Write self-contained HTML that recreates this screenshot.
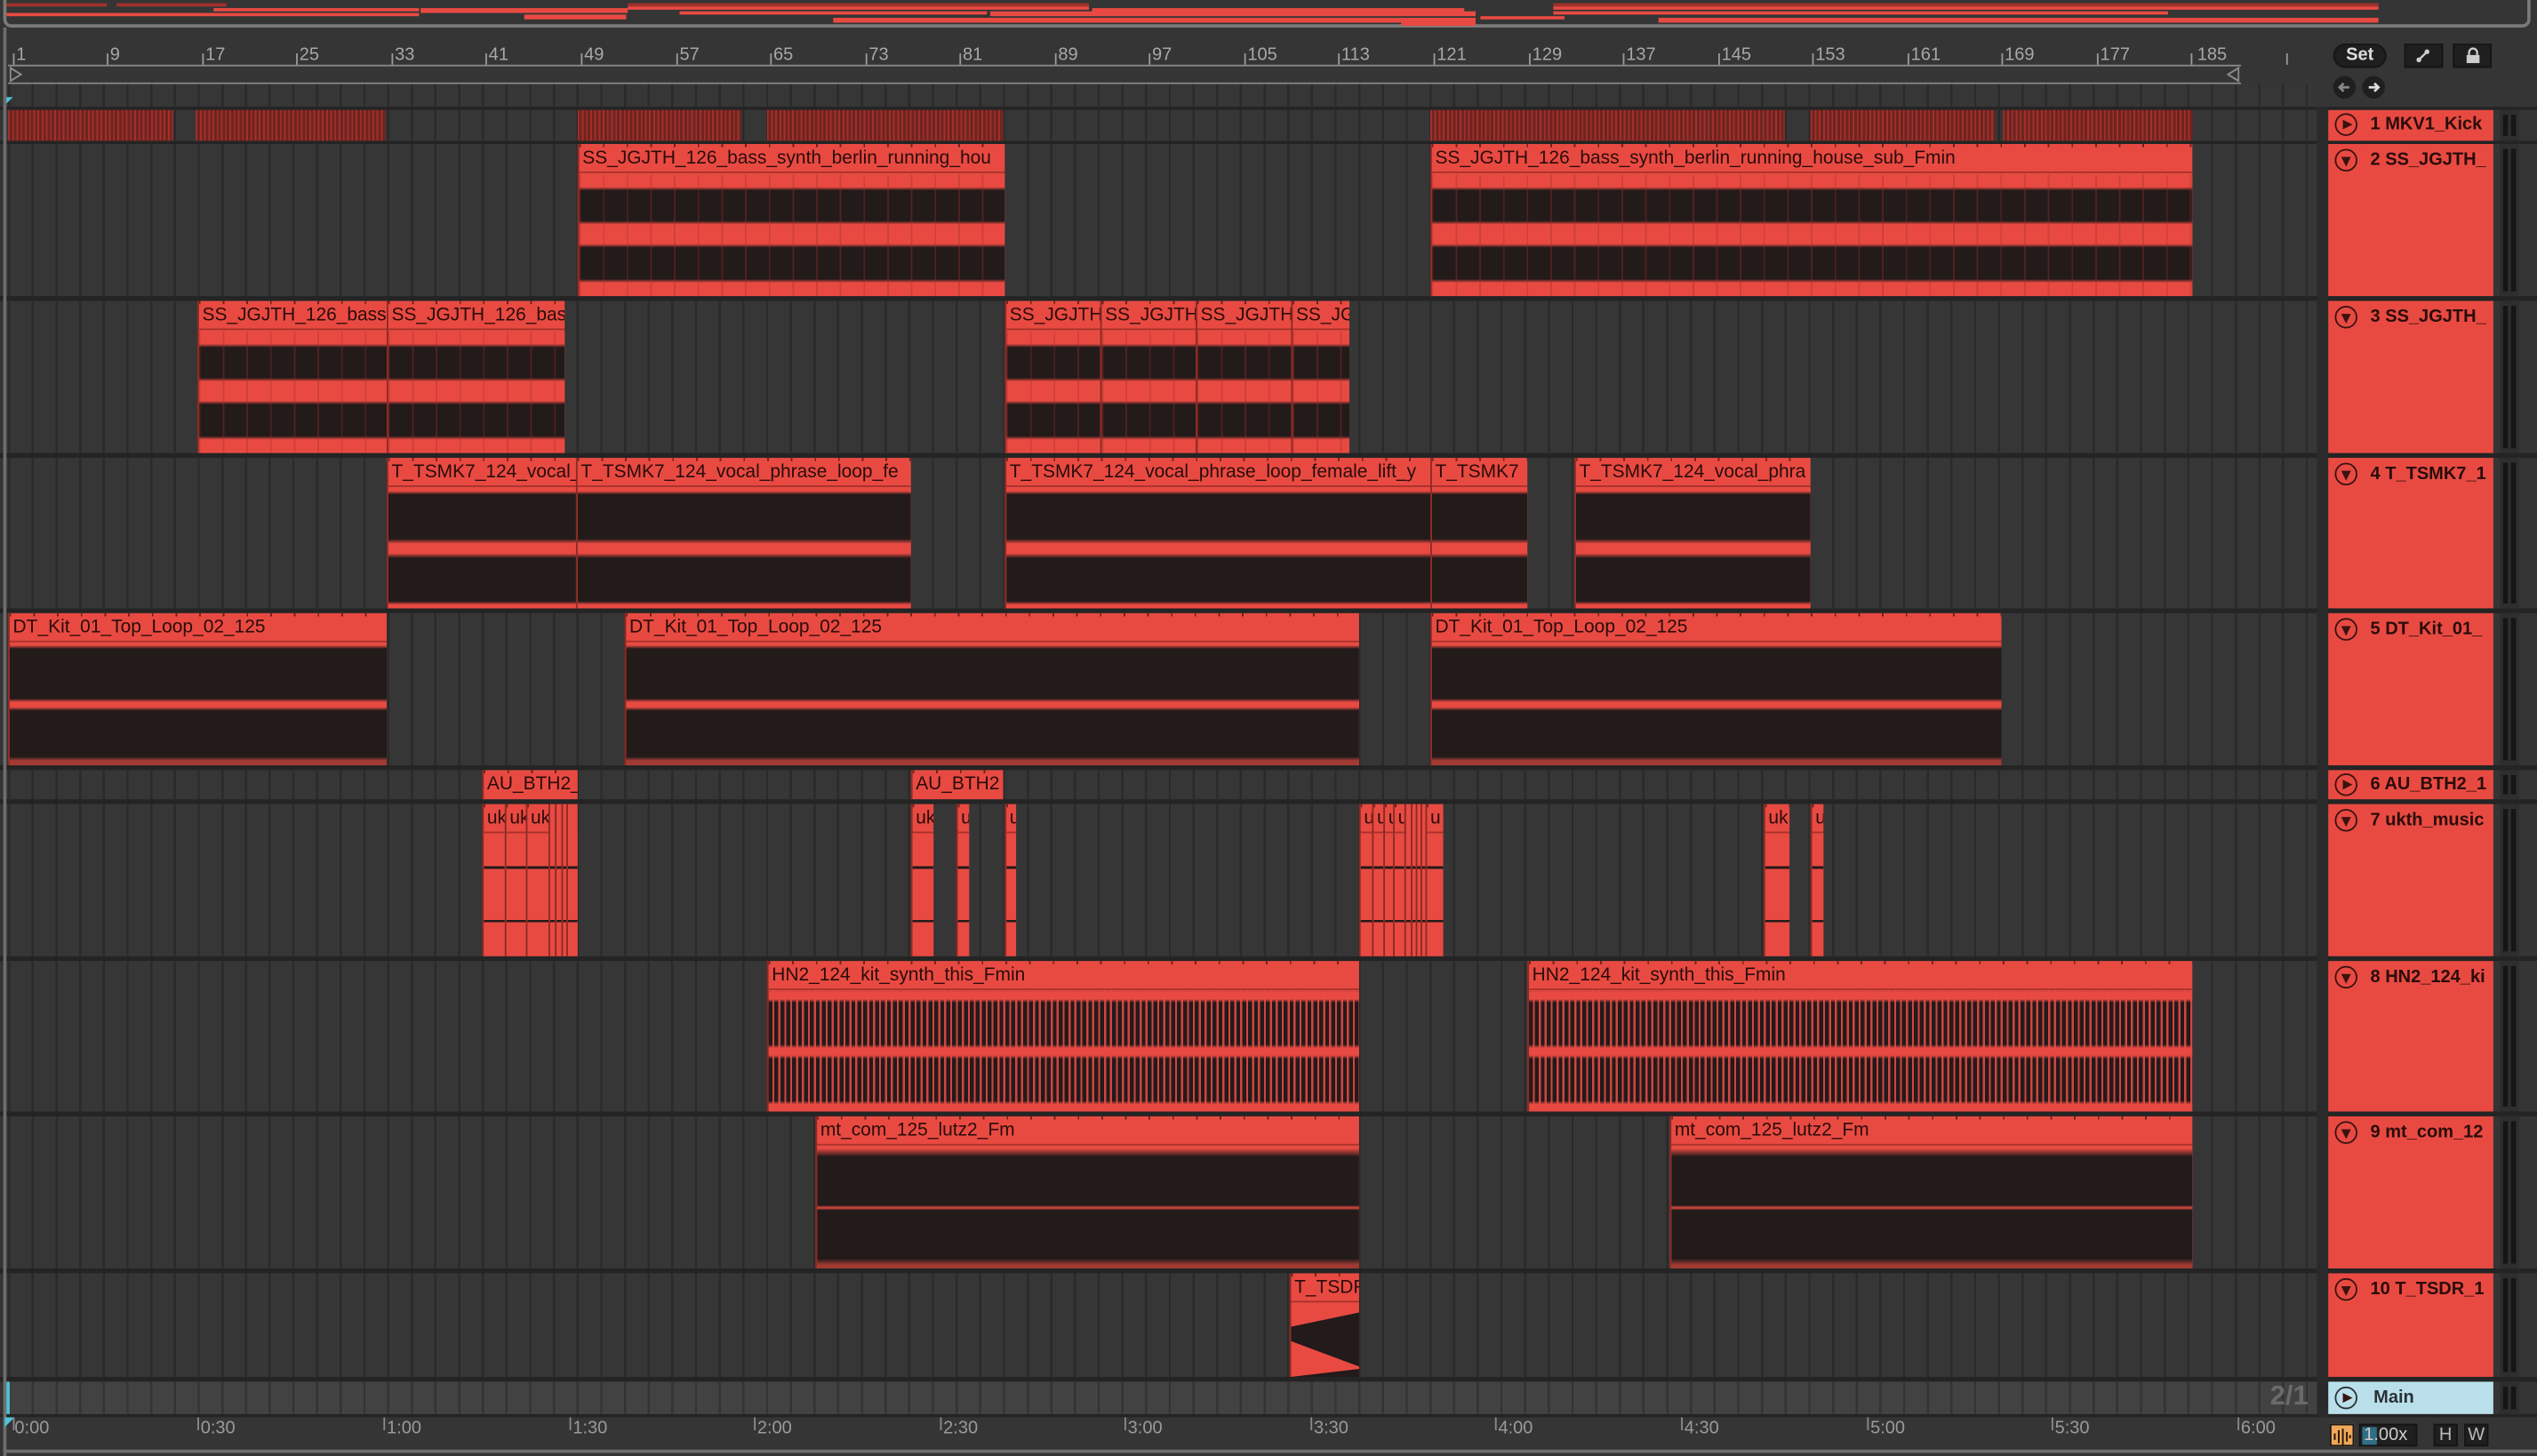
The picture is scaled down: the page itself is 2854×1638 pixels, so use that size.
<!DOCTYPE html>
<html><head><meta charset="utf-8"><style>
*{margin:0;padding:0;box-sizing:border-box}
html,body{width:2854px;height:1638px;overflow:hidden;background:#353535}
#s{position:absolute;left:0;top:0;width:1568px;height:900px;transform:scale(1.82015);transform-origin:0 0;background:#353535;font-family:"Liberation Sans",sans-serif;overflow:hidden}
.a{position:absolute}
.row{position:absolute;left:5px;width:1427px;background-color:#363636;background-image:repeating-linear-gradient(90deg,#2a2a2a 0 1.3px,transparent 1.3px 14.64px)}
.c{position:absolute;top:0;bottom:0;background:#e84a42;border-left:1px solid #8a2a24;overflow:hidden}
.h{position:absolute;left:0;right:0;top:0;height:18px;border-bottom:1px solid #a8322b;font-size:11.5px;color:#2a0c0a;line-height:19px;padding-left:2px;white-space:nowrap;overflow:hidden;background-image:repeating-linear-gradient(90deg,rgba(58,18,16,.7) 0 1px,transparent 1px 14.64px);background-size:100% 2px;background-repeat:repeat-x}
.b{position:absolute;left:0;right:0;top:19px;bottom:0}
.bass{background:repeating-linear-gradient(90deg,rgba(160,45,40,.35) 0 1px,transparent 1px 14.64px),linear-gradient(#e84a42 0 10%,#231a1a 13% 38%,#e84a42 41% 57%,#231a1a 60% 86%,#e84a42 89%)}
.voc{background:linear-gradient(#e84a42 0 2%,#231a1a 5% 42%,#e84a42 46% 54%,#231a1a 58% 94%,#e84a42 97%)}
.dt{background:linear-gradient(#e84a42 0 1%,#231a1a 4% 45%,#e84a42 48% 52%,#231a1a 55% 93%,#a03a33 96%)}
.hn{background:linear-gradient(#e84a42 0 6%,transparent 9% 44%,#e84a42 47% 53%,transparent 56% 91%,#e84a42 94%),repeating-linear-gradient(90deg,#231a1a 0 2.4px,#d04540 2.4px 3.66px)}
.mt{background:linear-gradient(#e84a42 0 1%,#231a1a 8% 48%,#c0403a 49.5% 50.5%,#231a1a 52% 92%,#a03a33 97%)}
.uk{background:linear-gradient(#e84a42 0 26%,#231a1a 26% 28%,#e84a42 28% 70%,#231a1a 70% 72%,#e84a42 72%)}
.kick{background-color:#6e2420;background-image:repeating-linear-gradient(90deg,#a3302a 0 1px,transparent 1px 2.6px)}
.sep{position:absolute;left:0;width:1568px;background:#242424}
.th{position:absolute;left:1439px;width:102px;background:#e84a42;color:#2a0c0a;font-size:11px;font-weight:bold;white-space:nowrap;overflow:hidden}
.th .t{position:absolute;left:26px;top:4px}
.ic{position:absolute;left:4px;top:3px;width:14px;height:14px;border:1.2px solid #3a1210;border-radius:50%}
.ic.p:after{content:"";position:absolute;left:4px;top:2.5px;border-left:6px solid #3a1210;border-top:3.5px solid transparent;border-bottom:3.5px solid transparent}
.ic.d:after{content:"";position:absolute;left:2.5px;top:4px;border-top:6px solid #3a1210;border-left:3.5px solid transparent;border-right:3.5px solid transparent}
.m{position:absolute;left:1545px;width:12px;background:#2e2e2e}
.m:before,.m:after{content:"";position:absolute;top:3px;bottom:3px;width:3px;background:#151515}
.m:before{left:2px}.m:after{left:7px}
.rl{position:absolute;top:28px;font-size:11px;color:#a8a8a8}
.rt{position:absolute;top:33px;width:1px;height:7px;background:#9a9a9a}
.tl{position:absolute;top:877px;font-size:11px;color:#9a9a9a}
.ttk{position:absolute;top:876px;width:1px;height:8px;background:#8a8a8a}
.ov{position:absolute;height:2px;background:#e84a42}
</style></head><body><div id="s">
<div class="a" style="left:2px;top:-6px;width:1562px;height:23px;border:2px solid #7a7a7a;border-radius:5px;background:#353535"></div>
<div class="ov" style="left:4px;top:2px;width:62px;background:#a3302a"></div>
<div class="ov" style="left:72px;top:2px;width:68px;background:#a3302a"></div>
<div class="ov" style="left:388px;top:2px;width:285px;background:#a3302a"></div>
<div class="ov" style="left:960px;top:2px;width:510px;background:#a3302a"></div>
<div class="ov" style="left:388px;top:4px;width:285px"></div>
<div class="ov" style="left:960px;top:4px;width:510px"></div>
<div class="ov" style="left:132px;top:5px;width:127px"></div>
<div class="ov" style="left:260px;top:5px;width:128px;height:3px"></div>
<div class="ov" style="left:675px;top:5px;width:230px;height:3px"></div>
<div class="ov" style="left:4px;top:8px;width:255px"></div>
<div class="ov" style="left:420px;top:7px;width:190px"></div>
<div class="ov" style="left:612px;top:7px;width:300px;height:3px"></div>
<div class="ov" style="left:960px;top:7px;width:380px"></div>
<div class="ov" style="left:324px;top:9px;width:63px;height:3px"></div>
<div class="ov" style="left:915px;top:10px;width:52px"></div>
<div class="ov" style="left:515px;top:11px;width:397px;height:3px"></div>
<div class="ov" style="left:1025px;top:11px;width:445px;height:3px"></div>
<div class="ov" style="left:866px;top:14px;width:46px"></div>
<div class="a" style="left:5px;top:40px;width:1380px;height:1px;background:#8a8a8a"></div>
<div class="a" style="left:5px;top:51px;width:1380px;height:1px;background:#8a8a8a"></div>
<div class="a" style="left:6px;top:41px;width:0;height:0;border-left:8px solid #8a8a8a;border-top:5px solid transparent;border-bottom:5px solid transparent"></div>
<div class="a" style="left:7px;top:42.5px;width:0;height:0;border-left:5.5px solid #353535;border-top:3.5px solid transparent;border-bottom:3.5px solid transparent"></div>
<div class="a" style="left:1376px;top:41px;width:0;height:0;border-right:8px solid #8a8a8a;border-top:5px solid transparent;border-bottom:5px solid transparent"></div>
<div class="a" style="left:1378px;top:42.5px;width:0;height:0;border-right:5.5px solid #353535;border-top:3.5px solid transparent;border-bottom:3.5px solid transparent"></div>
<div class="row" style="top:52px;height:14px"></div>
<div class="a" style="left:3px;top:60px;width:0;height:0;border-top:5px solid #4fc3d9;border-right:5px solid transparent"></div>
<div class="rt" style="left:8px"></div><div class="rl" style="left:10px">1</div>
<div class="rt" style="left:66px"></div><div class="rl" style="left:68px">9</div>
<div class="rt" style="left:125px"></div><div class="rl" style="left:127px">17</div>
<div class="rt" style="left:183px"></div><div class="rl" style="left:185px">25</div>
<div class="rt" style="left:242px"></div><div class="rl" style="left:244px">33</div>
<div class="rt" style="left:300px"></div><div class="rl" style="left:302px">41</div>
<div class="rt" style="left:359px"></div><div class="rl" style="left:361px">49</div>
<div class="rt" style="left:418px"></div><div class="rl" style="left:420px">57</div>
<div class="rt" style="left:476px"></div><div class="rl" style="left:478px">65</div>
<div class="rt" style="left:535px"></div><div class="rl" style="left:537px">73</div>
<div class="rt" style="left:593px"></div><div class="rl" style="left:595px">81</div>
<div class="rt" style="left:652px"></div><div class="rl" style="left:654px">89</div>
<div class="rt" style="left:710px"></div><div class="rl" style="left:712px">97</div>
<div class="rt" style="left:769px"></div><div class="rl" style="left:771px">105</div>
<div class="rt" style="left:827px"></div><div class="rl" style="left:829px">113</div>
<div class="rt" style="left:886px"></div><div class="rl" style="left:888px">121</div>
<div class="rt" style="left:945px"></div><div class="rl" style="left:947px">129</div>
<div class="rt" style="left:1003px"></div><div class="rl" style="left:1005px">137</div>
<div class="rt" style="left:1062px"></div><div class="rl" style="left:1064px">145</div>
<div class="rt" style="left:1120px"></div><div class="rl" style="left:1122px">153</div>
<div class="rt" style="left:1179px"></div><div class="rl" style="left:1181px">161</div>
<div class="rt" style="left:1237px"></div><div class="rl" style="left:1239px">169</div>
<div class="rt" style="left:1296px"></div><div class="rl" style="left:1298px">177</div>
<div class="rt" style="left:1354px"></div><div class="rl" style="left:1358px">185</div>
<div class="rt" style="left:1413px"></div>
<div class="a" style="left:1442px;top:27px;width:33px;height:15px;border-radius:8px;background:#1f1f1f;border:1px solid #151515;color:#ddd;font-size:11px;font-weight:bold;text-align:center;line-height:13px">Set</div>
<div class="a" style="left:1486px;top:27px;width:24px;height:15px;background:#1f1f1f;border:1px solid #151515"><svg width="22" height="13" viewBox="0 0 22 13"><line x1="8" y1="9" x2="13" y2="4" stroke="#ccc" stroke-width="1.3"/><circle cx="8" cy="9" r="1.5" fill="#ccc"/><circle cx="13" cy="4" r="1.5" fill="#ccc"/></svg></div>
<div class="a" style="left:1516px;top:27px;width:24px;height:15px;background:#1f1f1f;border:1px solid #151515"><svg width="22" height="13" viewBox="0 0 22 13"><rect x="7.5" y="6" width="8" height="5" fill="#ccc"/><path d="M9 6V4.5a2.5 2.5 0 0 1 5 0V6" stroke="#ccc" stroke-width="1.3" fill="none"/></svg></div>
<div class="a" style="left:1442px;top:47px;width:14px;height:14px;border-radius:50%;background:#1f1f1f"><svg width="14" height="14" viewBox="0 0 14 14"><path d="M10 7H4M6.5 4.5L4 7l2.5 2.5" stroke="#888" stroke-width="1.5" fill="none"/></svg></div>
<div class="a" style="left:1460px;top:47px;width:14px;height:14px;border-radius:50%;background:#1f1f1f"><svg width="14" height="14" viewBox="0 0 14 14"><path d="M4 7h6M7.5 4.5L10 7l-2.5 2.5" stroke="#ddd" stroke-width="1.5" fill="none"/></svg></div>
<div class="sep" style="top:66px;height:2px"></div>
<div class="sep" style="top:87px;height:2px"></div>
<div class="sep" style="top:183px;height:3px"></div>
<div class="sep" style="top:280px;height:3px"></div>
<div class="sep" style="top:376px;height:3px"></div>
<div class="sep" style="top:473px;height:3px"></div>
<div class="sep" style="top:494px;height:3px"></div>
<div class="sep" style="top:591px;height:3px"></div>
<div class="sep" style="top:687px;height:3px"></div>
<div class="sep" style="top:784px;height:3px"></div>
<div class="sep" style="top:851px;height:3px"></div>
<div class="sep" style="top:874px;height:2px"></div>
<div class="a" style="left:2px;top:17px;width:2px;height:883px;background:#6e6e6e"></div>
<div class="row" style="top:68px;height:19px">
<div class="c kick" style="left:0;width:102px;border:0"></div>
<div class="c kick" style="left:116px;width:117px;border:0"></div>
<div class="c kick" style="left:352px;width:101px;border:0"></div>
<div class="c kick" style="left:469px;width:146px;border:0"></div>
<div class="c kick" style="left:879px;width:219px;border:0"></div>
<div class="c kick" style="left:1114px;width:114px;border:0"></div>
<div class="c kick" style="left:1233px;width:117px;border:0"></div>
</div>
<div class="row" style="top:89px;height:94px">
<div class="c" style="left:352px;width:264px"><div class="h">SS_JGJTH_126_bass_synth_berlin_running_hou</div><div class="b bass"></div></div>
<div class="c" style="left:879px;width:471px"><div class="h">SS_JGJTH_126_bass_synth_berlin_running_house_sub_Fmin</div><div class="b bass"></div></div>
</div>
<div class="row" style="top:186px;height:94px">
<div class="c" style="left:117px;width:117px"><div class="h">SS_JGJTH_126_bass</div><div class="b bass"></div></div>
<div class="c" style="left:234px;width:110px"><div class="h">SS_JGJTH_126_bas</div><div class="b bass"></div></div>
<div class="c" style="left:616px;width:59px"><div class="h">SS_JGJTH</div><div class="b bass"></div></div>
<div class="c" style="left:675px;width:59px"><div class="h">SS_JGJTH</div><div class="b bass"></div></div>
<div class="c" style="left:734px;width:59px"><div class="h">SS_JGJTH</div><div class="b bass"></div></div>
<div class="c" style="left:793px;width:36px"><div class="h">SS_JG</div><div class="b bass"></div></div>
</div>
<div class="row" style="top:283px;height:93px">
<div class="c" style="left:234px;width:117px"><div class="h">T_TSMK7_124_vocal_</div><div class="b voc"></div></div>
<div class="c" style="left:351px;width:207px"><div class="h">T_TSMK7_124_vocal_phrase_loop_fe</div><div class="b voc"></div></div>
<div class="c" style="left:616px;width:263px"><div class="h">T_TSMK7_124_vocal_phrase_loop_female_lift_y</div><div class="b voc"></div></div>
<div class="c" style="left:879px;width:60px"><div class="h">T_TSMK7</div><div class="b voc"></div></div>
<div class="c" style="left:968px;width:146px"><div class="h">T_TSMK7_124_vocal_phra</div><div class="b voc"></div></div>
</div>
<div class="row" style="top:379px;height:94px">
<div class="c" style="left:0;width:234px"><div class="h">DT_Kit_01_Top_Loop_02_125</div><div class="b dt"></div></div>
<div class="c" style="left:381px;width:454px"><div class="h">DT_Kit_01_Top_Loop_02_125</div><div class="b dt"></div></div>
<div class="c" style="left:879px;width:353px"><div class="h">DT_Kit_01_Top_Loop_02_125</div><div class="b dt"></div></div>
</div>
<div class="row" style="top:476px;height:18px">
<div class="c" style="left:293px;width:59px"><div class="h" style="border:0">AU_BTH2_</div></div>
<div class="c" style="left:558px;width:57px"><div class="h" style="border:0">AU_BTH2</div></div>
</div>
<div class="row" style="top:497px;height:94px">
<div class="c" style="left:293px;width:14px"><div class="h">uk</div><div class="b uk"></div></div>
<div class="c" style="left:307px;width:13px"><div class="h">uk</div><div class="b uk"></div></div>
<div class="c" style="left:320px;width:14px"><div class="h">uk</div><div class="b uk"></div></div>
<div class="c" style="left:334px;width:4px"><div class="b uk"></div></div>
<div class="c" style="left:338px;width:4px"><div class="b uk"></div></div>
<div class="c" style="left:342px;width:3px"><div class="b uk"></div></div>
<div class="c" style="left:345px;width:7px"><div class="b uk"></div></div>
<div class="c" style="left:558px;width:14px"><div class="h">uk</div><div class="b uk"></div></div>
<div class="c" style="left:586px;width:8px"><div class="h">u</div><div class="b uk"></div></div>
<div class="c" style="left:616px;width:7px"><div class="h">u</div><div class="b uk"></div></div>
<div class="c" style="left:835px;width:8px"><div class="h">u</div><div class="b uk"></div></div>
<div class="c" style="left:843px;width:7px"><div class="h">u</div><div class="b uk"></div></div>
<div class="c" style="left:850px;width:6px"><div class="h">u</div><div class="b uk"></div></div>
<div class="c" style="left:856px;width:7px"><div class="h">u</div><div class="b uk"></div></div>
<div class="c" style="left:863px;width:4px"><div class="b uk"></div></div>
<div class="c" style="left:867px;width:3px"><div class="b uk"></div></div>
<div class="c" style="left:870px;width:3px"><div class="b uk"></div></div>
<div class="c" style="left:873px;width:3px"><div class="b uk"></div></div>
<div class="c" style="left:876px;width:11px"><div class="h">u</div><div class="b uk"></div></div>
<div class="c" style="left:1085px;width:16px"><div class="h">uk</div><div class="b uk"></div></div>
<div class="c" style="left:1114px;width:8px"><div class="h">u</div><div class="b uk"></div></div>
</div>
<div class="row" style="top:594px;height:93px">
<div class="c" style="left:469px;width:366px"><div class="h">HN2_124_kit_synth_this_Fmin</div><div class="b hn"></div></div>
<div class="c" style="left:939px;width:411px"><div class="h">HN2_124_kit_synth_this_Fmin</div><div class="b hn"></div></div>
</div>
<div class="row" style="top:690px;height:94px">
<div class="c" style="left:499px;width:336px"><div class="h">mt_com_125_lutz2_Fm</div><div class="b mt"></div></div>
<div class="c" style="left:1027px;width:323px"><div class="h">mt_com_125_lutz2_Fm</div><div class="b mt"></div></div>
</div>
<div class="row" style="top:787px;height:64px">
<div class="c" style="left:792px;width:43px"><div class="h">T_TSDR</div><div class="b" style="background:#e84a42"><svg width="43" height="45" viewBox="0 0 43 45" preserveAspectRatio="none" style="position:absolute;left:0;top:0"><path d="M0 14 L43 5 L43 39 L0 23 Z" fill="#231a1a"/><path d="M0 45 L43 40 L43 45 Z" fill="#231a1a"/></svg></div></div>
</div>
<div class="row" style="top:854px;height:20px;background-color:#424242;background-image:repeating-linear-gradient(90deg,#333 0 1.3px,transparent 1.3px 14.64px)"></div>
<div class="a" style="left:4px;top:854px;width:2px;height:20px;background:#4fc3d9"></div>
<div class="a" style="left:1403px;top:853px;font-size:17px;font-weight:bold;color:#6a6a6a">2/1</div>
<div class="a" style="left:3px;top:876px;width:0;height:0;border-top:6px solid #4fc3d9;border-right:6px solid transparent"></div>
<div class="ttk" style="left:8px"></div><div class="tl" style="left:9px">0:00</div>
<div class="ttk" style="left:122px"></div><div class="tl" style="left:124px">0:30</div>
<div class="ttk" style="left:237px"></div><div class="tl" style="left:239px">1:00</div>
<div class="ttk" style="left:352px"></div><div class="tl" style="left:354px">1:30</div>
<div class="ttk" style="left:466px"></div><div class="tl" style="left:468px">2:00</div>
<div class="ttk" style="left:581px"></div><div class="tl" style="left:583px">2:30</div>
<div class="ttk" style="left:695px"></div><div class="tl" style="left:697px">3:00</div>
<div class="ttk" style="left:810px"></div><div class="tl" style="left:812px">3:30</div>
<div class="ttk" style="left:924px"></div><div class="tl" style="left:926px">4:00</div>
<div class="ttk" style="left:1039px"></div><div class="tl" style="left:1041px">4:30</div>
<div class="ttk" style="left:1154px"></div><div class="tl" style="left:1156px">5:00</div>
<div class="ttk" style="left:1268px"></div><div class="tl" style="left:1270px">5:30</div>
<div class="ttk" style="left:1383px"></div><div class="tl" style="left:1385px">6:00</div>
<div class="a" style="left:2px;top:896px;width:1566px;height:4px;border-top:2px solid #6e6e6e"></div>
<div class="a" style="left:1432px;top:66px;width:7px;height:810px;background:#2a2a2a"></div>
<div class="th" style="top:68px;height:19px"><div class="ic p" style="top:2px"></div><div class="t" style="top:3px">1 MKV1_Kick</div></div>
<div class="th" style="top:89px;height:94px"><div class="ic d"></div><div class="t">2 SS_JGJTH_</div></div>
<div class="th" style="top:186px;height:94px"><div class="ic d"></div><div class="t">3 SS_JGJTH_</div></div>
<div class="th" style="top:283px;height:93px"><div class="ic d"></div><div class="t">4 T_TSMK7_1</div></div>
<div class="th" style="top:379px;height:94px"><div class="ic d"></div><div class="t">5 DT_Kit_01_</div></div>
<div class="th" style="top:476px;height:18px"><div class="ic p" style="top:2px"></div><div class="t" style="top:3px">6 AU_BTH2_1</div></div>
<div class="th" style="top:497px;height:94px"><div class="ic d"></div><div class="t">7 ukth_music</div></div>
<div class="th" style="top:594px;height:93px"><div class="ic d"></div><div class="t">8 HN2_124_ki</div></div>
<div class="th" style="top:690px;height:94px"><div class="ic d"></div><div class="t">9 mt_com_12</div></div>
<div class="th" style="top:787px;height:64px"><div class="ic d"></div><div class="t">10 T_TSDR_1</div></div>
<div class="th" style="top:854px;height:20px;background:#b9e0ea;color:#2a3035"><div class="ic p" style="border-color:#2a3035"></div><div class="t" style="left:28px">Main</div></div>
<div class="m" style="top:68px;height:19px"></div>
<div class="m" style="top:89px;height:94px"></div>
<div class="m" style="top:186px;height:94px"></div>
<div class="m" style="top:283px;height:93px"></div>
<div class="m" style="top:379px;height:94px"></div>
<div class="m" style="top:476px;height:18px"></div>
<div class="m" style="top:497px;height:94px"></div>
<div class="m" style="top:594px;height:93px"></div>
<div class="m" style="top:690px;height:94px"></div>
<div class="m" style="top:787px;height:64px"></div>
<div class="m" style="top:854px;height:20px"></div>
<div class="a" style="left:1440px;top:880px;width:15px;height:14px;background:#f0a858;border:1px solid #1a1a1a"><svg width="13" height="12" viewBox="0 0 13 12"><path d="M2 4v4M4.5 2v8M7 1v10M9.5 3v6M11.5 5v2" stroke="#2a1a0a" stroke-width="1.1"/></svg></div>
<div class="a" style="left:1458px;top:880px;width:36px;height:14px;background:#1f1f1f;border:1px solid #151515;font-size:11px;color:#ccc;line-height:12px;padding-left:2px"><span style="position:absolute;left:1px;top:1px;width:9px;height:11px;background:#2f6f86"></span><span style="position:relative">1.00x</span></div>
<div class="a" style="left:1504px;top:880px;width:15px;height:14px;background:#1f1f1f;border:1px solid #151515;font-size:11px;color:#bbb;text-align:center;line-height:12px">H</div>
<div class="a" style="left:1523px;top:880px;width:15px;height:14px;background:#1f1f1f;border:1px solid #151515;font-size:11px;color:#bbb;text-align:center;line-height:12px">W</div>
</div></body></html>
